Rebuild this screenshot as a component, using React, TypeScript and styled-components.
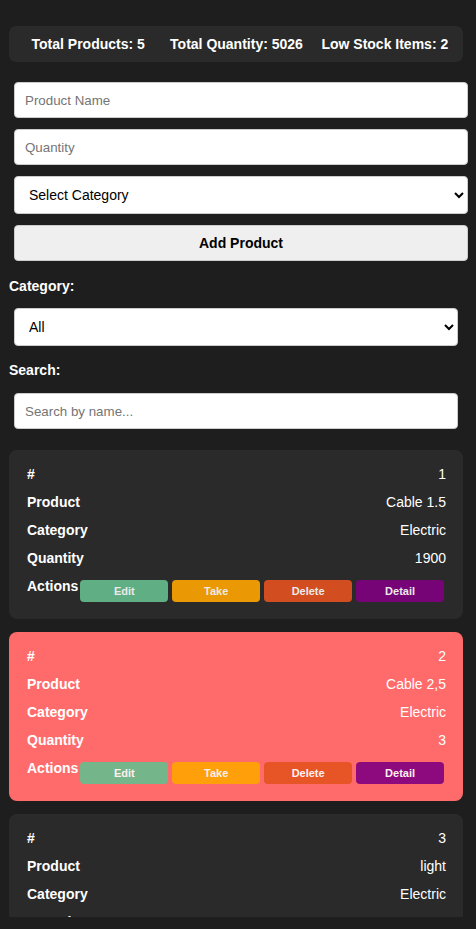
import React from "react";
import styled, { createGlobalStyle } from "styled-components";

const GlobalStyle = createGlobalStyle`
  html, body {
    margin: 0;
    padding: 0;
    background: #1e1e1e;
    font-family: "Liberation Sans", Arial, sans-serif;
    overflow: hidden;
  }
  * { box-sizing: border-box; }
`;

const Page = styled.div`
  padding: 26px 13px 0 9px;
  color: #ffffff;
`;

const StatsBar = styled.div`
  display: grid;
  grid-template-columns: repeat(3, 1fr);
  align-items: center;
  height: 36px;
  padding: 0 4px 0 5px;
  background: #2a2a2a;
  border-radius: 7px;
  font-size: 14px;
  font-weight: bold;
  text-align: center;
  white-space: nowrap;
`;

const Stat = styled.span``;

const Form = styled.div`
  display: flex;
  flex-direction: column;
  gap: 11px;
  margin: 20px -5px 0 5px;
`;

const TextInput = styled.input<{ $inset?: boolean }>`
  display: block;
  height: 36px;
  padding: 0 10px;
  border: 1px solid #cccccc;
  border-radius: 4px;
  background: #ffffff;
  color: #000;
  font-family: "Liberation Sans", Arial, sans-serif;
  font-size: 13.33px;
  outline: none;
  margin: ${(p) => (p.$inset ? "15px 5px 0 5px" : "0")};
  width: ${(p) => (p.$inset ? "calc(100% - 10px)" : "100%")};
  &::placeholder { color: #757575; }
`;

const Select = styled.select<{ $inset?: boolean }>`
  display: block;
  height: 38px;
  padding: 0 10px;
  border: 1px solid #cccccc;
  border-radius: 4px;
  background: #ffffff;
  color: #000;
  font-family: "Liberation Sans", Arial, sans-serif;
  font-size: 14px;
  margin: ${(p) => (p.$inset ? "14px 5px 0 5px" : "0")};
  width: ${(p) => (p.$inset ? "calc(100% - 10px)" : "100%")};
`;

const AddButton = styled.button`
  height: 36px;
  border: 1px solid #cccccc;
  border-radius: 4px;
  background: #efefef;
  color: #000;
  font-family: "Liberation Sans", Arial, sans-serif;
  font-size: 14px;
  font-weight: bold;
`;

const FilterLabel = styled.label<{ $top: number }>`
  display: block;
  margin-top: ${(p) => p.$top}px;
  font-size: 14px;
  font-weight: bold;
  line-height: 16px;
`;

const CardList = styled.div`
  display: flex;
  flex-direction: column;
  gap: 13px;
  margin-top: 21px;
`;

const Card = styled.div<{ $low?: boolean }>`
  background: ${(p) => (p.$low ? "#ff6b6b" : "#2a2a2a")};
  border-radius: 8px;
  padding: 10px 17px 13px 18px;
`;

const Row = styled.div<{ $start?: boolean }>`
  display: flex;
  justify-content: ${(p) => (p.$start ? "flex-start" : "space-between")};
  align-items: flex-start;
  padding: 4px 0;
  line-height: 20px;
  font-size: 14px;
`;

const Label = styled.span`
  font-weight: bold;
`;

const Value = styled.span``;

const ButtonGroup = styled.div`
  flex: 1;
  display: flex;
  gap: 4px;
  margin: 4px 2px 0 2px;
`;

const ActionButton = styled.button<{ $color: string }>`
  flex: 1;
  height: 22px;
  border: none;
  border-radius: 4px;
  background: ${(p) => p.$color};
  color: #ffffff;
  opacity: 0.9;
  font-family: "Liberation Sans", Arial, sans-serif;
  font-size: 11px;
  font-weight: bold;
  padding: 0;
`;

const BottomStrip = styled.div`
  position: fixed;
  left: 0;
  right: 0;
  bottom: 0;
  height: 12px;
  background: #1e1e1e;
`;

const products = [
  { id: 1, name: "Cable 1.5", category: "Electric", quantity: 1900 },
  { id: 2, name: "Cable 2,5", category: "Electric", quantity: 3 },
  { id: 3, name: "light", category: "Electric", quantity: 1000 },
  { id: 4, name: "Switch", category: "Electric", quantity: 2 },
  { id: 5, name: "Pipe", category: "Plumbing", quantity: 2121 },
];

const actions = [
  { label: "Edit", color: "#66be8e" },
  { label: "Take", color: "#ffa500" },
  { label: "Delete", color: "#e5531f" },
  { label: "Detail", color: "#800080" },
];

export default function App() {
  const total = products.reduce((s, p) => s + p.quantity, 0);
  const low = products.filter((p) => p.quantity < 10).length;
  return (
    <>
      <GlobalStyle />
      <Page>
        <StatsBar>
          <Stat>Total Products: {products.length}</Stat>
          <Stat>Total Quantity: {total}</Stat>
          <Stat>Low Stock Items: {low}</Stat>
        </StatsBar>

        <Form>
          <TextInput placeholder="Product Name" />
          <TextInput placeholder="Quantity" />
          <Select defaultValue="">
            <option value="">Select Category</option>
            <option value="Electric">Electric</option>
            <option value="Plumbing">Plumbing</option>
          </Select>
          <AddButton>Add Product</AddButton>
        </Form>

        <FilterLabel $top={17}>Category:</FilterLabel>
        <Select $inset defaultValue="All">
          <option value="All">All</option>
          <option value="Electric">Electric</option>
          <option value="Plumbing">Plumbing</option>
        </Select>

        <FilterLabel $top={16}>Search:</FilterLabel>
        <TextInput $inset placeholder="Search by name..." />

        <CardList>
          {products.map((p) => (
            <Card key={p.id} $low={p.quantity < 10}>
              <Row>
                <Label>#</Label>
                <Value>{p.id}</Value>
              </Row>
              <Row>
                <Label>Product</Label>
                <Value>{p.name}</Value>
              </Row>
              <Row>
                <Label>Category</Label>
                <Value>{p.category}</Value>
              </Row>
              <Row>
                <Label>Quantity</Label>
                <Value>{p.quantity}</Value>
              </Row>
              <Row $start>
                <Label>Actions</Label>
                <ButtonGroup>
                  {actions.map((a) => (
                    <ActionButton key={a.label} $color={a.color}>
                      {a.label}
                    </ActionButton>
                  ))}
                </ButtonGroup>
              </Row>
            </Card>
          ))}
        </CardList>
      </Page>
      <BottomStrip />
    </>
  );
}
